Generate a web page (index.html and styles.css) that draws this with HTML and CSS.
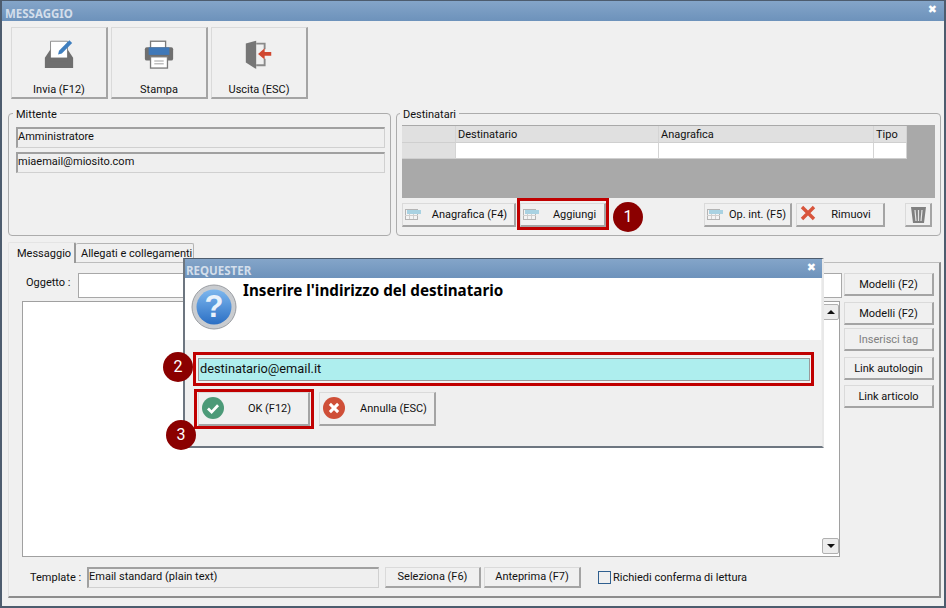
FILE: index.html
```html
<!DOCTYPE html>
<html lang="it">
<head>
<meta charset="utf-8">
<title>Messaggio</title>
<link rel="stylesheet" href="styles.css">
</head>
<body>
<div class="window">
  <div class="titlebar"><span class="title">MESSAGGIO</span><span class="close">✖</span></div>
  <div class="content">
    <div class="toolbar">
      <button class="btn tool">
        <svg width="34" height="34" viewBox="0 0 34 34"><path d="M8 4.500h18v18H8z" fill="#fff" stroke="#8a8a8a"/><path d="M2 22l6-9v9h18v-9l6 9v11H2z" fill="#6f6f6f"/><path d="M8 22q9 5 18 0v4H8z" fill="#6f6f6f"/><path d="M16 18.500l1-4L28 3.500l3 3-11 11z" fill="#3f7fbf"/></svg>
        <span>Invia (F12)</span>
      </button>
      <button class="btn tool">
        <svg width="34" height="34" viewBox="0 0 34 34"><rect x="8" y="4.500" width="16" height="8" fill="#fff" stroke="#7a7a7a" stroke-width="1.400"/><rect x="2" y="11" width="30" height="14" rx="2" fill="#6f6f6f"/><path d="M6 11h22v8H6z" fill="#3f78b8"/><rect x="8" y="21" width="18" height="12" fill="#fff" stroke="#7a7a7a" stroke-width="1.400"/><path d="M12 25.500h10M12 28.500h10" stroke="#999"/></svg>
        <span>Stampa</span>
      </button>
      <button class="btn tool">
        <svg width="34" height="34" viewBox="0 0 34 34"><path d="M3 7l11-3v30L3 27z" fill="#767676"/><path d="M14 6h10v7h-2V8h-8zM14 29h8v-6h2v8H14z" fill="#8a8a8a"/><path d="M16 18l7-6v4h7v4h-7v4z" fill="#d0472f"/></svg>
        <span>Uscita (ESC)</span>
      </button>
    </div>

    <div class="groups">
      <fieldset class="group sender">
        <legend>Mittente</legend>
        <div class="readonly">Amministratore</div>
        <div class="readonly">miaemail@miosito.com</div>
      </fieldset>
      <fieldset class="group recipients">
        <legend>Destinatari</legend>
        <div class="grid">
          <div class="grid-table">
            <div class="cell head"></div><div class="cell head">Destinatario</div><div class="cell head">Anagrafica</div><div class="cell head">Tipo</div>
            <div class="cell head"></div><div class="cell"></div><div class="cell"></div><div class="cell"></div>
          </div>
        </div>
        <div class="recipient-actions">
          <button class="btn act act-ana"><svg class="tbl" width="16" height="13" viewBox="0 0 16 13"><rect x="0.500" y="2.500" width="12" height="10" fill="#f4f4f4" stroke="#b4b4b4"/><path d="M0 8.500h13M4.500 3v9M8.500 3v9" stroke="#cfcfcf"/><rect x="2" y="3" width="14" height="4" fill="#a9d2e2"/></svg><span>Anagrafica (F4)</span></button>
          <button class="btn act act-add"><svg class="tbl" width="16" height="13" viewBox="0 0 16 13"><rect x="0.500" y="2.500" width="12" height="10" fill="#f4f4f4" stroke="#b4b4b4"/><path d="M0 8.500h13M4.500 3v9M8.500 3v9" stroke="#cfcfcf"/><rect x="2" y="3" width="14" height="4" fill="#a9d2e2"/></svg><span>Aggiungi</span></button>
          <button class="btn act act-op"><svg class="tbl" width="16" height="13" viewBox="0 0 16 13"><rect x="0.500" y="2.500" width="12" height="10" fill="#f4f4f4" stroke="#b4b4b4"/><path d="M0 8.500h13M4.500 3v9M8.500 3v9" stroke="#cfcfcf"/><rect x="2" y="3" width="14" height="4" fill="#a9d2e2"/></svg><span>Op. int. (F5)</span></button>
          <button class="btn act act-rem"><svg class="tbl x" width="16" height="16" viewBox="0 0 16 16"><path d="M2 2l12 12M14 2L2 14" stroke="#d8553c" stroke-width="3.400"/></svg><span>Rimuovi</span></button>
          <button class="btn act act-trash"><svg width="15" height="17" viewBox="0 0 15 17"><path d="M0 1h15l-2 16H2z" fill="#808080"/><path d="M4 4l1 11M7.500 4v11M11 4l-1 11" stroke="#e4e4e4" stroke-width="1.200"/></svg></button>
        </div>
      </fieldset>
    </div>

    <div class="tabs">
      <div class="tab active">Messaggio</div>
      <div class="tab">Allegati e collegamenti</div>
    </div>
    <div class="panel">
      <div class="subject-row">
        <label class="subject-label">Oggetto :</label>
        <div class="subject-input"></div>
        <button class="btn side">Modelli (F2)</button>
      </div>
      <div class="editor-row">
        <div class="editor">
          <div class="scrollbar">
            <span class="sb-btn"><i class="arrow up"></i></span>
            <span class="sb-btn"><i class="arrow down"></i></span>
          </div>
        </div>
        <div class="side-buttons">
          <button class="btn side">Modelli (F2)</button>
          <button class="btn side disabled">Inserisci tag</button>
          <button class="btn side login">Link autologin</button>
          <button class="btn side article">Link articolo</button>
        </div>
      </div>
      <div class="template-row">
        <label class="template-label">Template :</label>
        <div class="readonly template-field">Email standard (plain text)</div>
        <button class="btn tpl tpl-sel">Seleziona (F6)</button>
        <button class="btn tpl tpl-pre">Anteprima (F7)</button>
        <span class="check"></span>
        <span class="check-label">Richiedi conferma di lettura</span>
      </div>
    </div>
  </div>

  <div class="dialog">
    <div class="titlebar dlg-title"><span class="title">REQUESTER</span><span class="close">✖</span></div>
    <div class="dlg-top">
      <svg width="46" height="46" viewBox="0 0 46 46">
        <defs><linearGradient id="q" x1="0" y1="0" x2="0" y2="1"><stop offset="0" stop-color="#7db7ee"/><stop offset="1" stop-color="#2b6fc4"/></linearGradient></defs>
        <circle cx="23" cy="23" r="22" fill="#c9ccd0" stroke="#9a9da2"/>
        <circle cx="23" cy="23" r="17.500" fill="url(#q)"/>
        <text x="23" y="33" class="qmark" text-anchor="middle">?</text>
      </svg>
      <div class="dlg-heading">Inserire l'indirizzo del destinatario</div>
    </div>
    <div class="dlg-body">
      <div class="dlg-input">destinatario@email.it</div>
      <div class="dlg-actions">
        <button class="btn dlg-btn dlg-ok"><svg width="22" height="22" viewBox="0 0 24 24"><circle cx="12" cy="12" r="12" fill="#4c9a78"/><path d="M6.500 12.500l4 4 7-7.500" fill="none" stroke="#fff" stroke-width="3"/></svg><span>OK (F12)</span></button>
        <button class="btn dlg-btn dlg-no"><svg width="22" height="22" viewBox="0 0 24 24"><circle cx="12" cy="12" r="12" fill="#cf4f38"/><path d="M7.500 7.500l9 9M16.500 7.500l-9 9" stroke="#fff" stroke-width="3.200"/></svg><span>Annulla (ESC)</span></button>
      </div>
    </div>
  </div>

  <span class="mark box1"></span>
  <span class="mark box2"></span>
  <span class="mark box3"></span>
  <span class="badge b1">1</span>
  <span class="badge b2">2</span>
  <span class="badge b3">3</span>
</div>
</body>
</html>
```
FILE: styles.css
```css
* { box-sizing: border-box; }
html, body { margin: 0; padding: 0; }
body { width: 946px; height: 608px; overflow: hidden; background: #f0f0f0; font-family: Roboto, "Noto Sans", sans-serif; font-size: 11px; color: #111; }
.window { position: relative; width: 946px; height: 608px; display: flex; flex-direction: column; border: 2px solid #4d5c6e; border-top-width: 1px; background: #f0f0f0; }
.titlebar { flex: none; height: 20px; padding: 5px 3px 0 3px; display: flex; justify-content: space-between; background: linear-gradient(#84a5c9, #6d92bb); color: #d3deeb; }
.title { font-family: "Noto Sans", sans-serif; font-weight: bold; font-size: 11.5px; line-height: 15px; }
.close { color: #fff; font-size: 11px; line-height: 14px; margin-top: -3px; margin-right: 4px; font-family: "DejaVu Sans", sans-serif; }
.content { flex: 1; display: flex; flex-direction: column; padding: 6px 3px 8px 6px; min-height: 0; }
.btn { font: inherit; color: #111; background: #f0f0f0; border: 1px solid #dadada; border-right: 2px solid #a4a4a4; border-bottom: 2px solid #a4a4a4; padding: 0; margin: 0; display: flex; align-items: center; justify-content: center; }
.toolbar { display: flex; gap: 3px; padding-left: 3px; height: 72px; flex: none; }
.tool { width: 97px; height: 72px; flex-direction: column; padding-top: 9px; }
.tool span { margin-top: 13px; line-height: 15px; }
.groups { display: flex; gap: 5px; height: 131px; margin-top: 6px; flex: none; }
.group { margin: 0; padding: 0 5px; border: 1px solid #acacac; border-radius: 4px; min-width: 0; }
.group legend { padding: 3px 3px 0; margin-left: -2px; line-height: 14px; }
.sender { width: 383px; padding-top: 5px; padding-left: 7px; }
.sender legend { margin-left: -3px; }
.recipients { flex: 1; padding-top: 3px; }
.readonly { height: 21px; padding: 0; margin-top: 4px; line-height: 15px; border: 1px solid #d0d0d0; border-top: 2px solid #a0a0a0; border-left: 2px solid #a0a0a0; background: #efefef; white-space: nowrap; }
.sender .readonly:first-of-type { margin-top: 0; }
.grid { height: 73px; background: #a9a9a9; }
.grid-table { width: 505px; display: grid; grid-template-columns: 54px 203px 215px 33px; grid-template-rows: 17px 16px; padding-top: 1px; }
.cell { background: #fff; border-right: 1px solid #d4d4d4; border-bottom: 1px solid #cfcfcf; padding: 0 2px; line-height: 15px; }
.cell.head { background: #e0e0e0; padding-top: 1px; }
.recipient-actions { display: flex; margin-top: 5px; height: 24px; }
.act { position: relative; height: 24px; padding-left: 28px; }
.tbl { position: absolute; left: 2px; top: 3px; }
.tbl.x { left: 3px; top: 1px; }
.act-ana { width: 114px; padding-left: 22px; }
.act-add { width: 86px; margin-left: 4px; padding-left: 24px; }
.act-op { width: 88px; margin-left: 98px; padding-left: 20px; }
.act-rem { width: 89px; margin-left: 4px; padding-left: 22px; }
.act-trash { width: 27px; margin-left: 20px; padding: 0; }
.tabs { display: flex; height: 20px; margin-top: 6px; flex: none; align-items: flex-end; }
.tab { height: 19px; width: 118px; padding: 2px 0 0 5px; line-height: 15px; border: 1px solid #b4b4b4; border-bottom: none; border-left: none; border-radius: 2px 2px 0 0; white-space: nowrap; }
.tab.active { height: 21px; width: 68px; padding: 3px 0 0 8px; border-top: 1px solid #e4e4e4; border-right: 2px solid #999; border-left: 1px solid #e4e4e4; background: #f0f0f0; margin-bottom: -1px; position: relative; }
.panel { flex: 1; display: flex; flex-direction: column; padding: 10px 5px 0 13px; border-top: 1px solid #bdbdbd; border-left: 1px solid #e0e0e0; border-right: 2px solid #8d8d8d; border-bottom: 2px solid #8d8d8d; min-height: 0; width: 933px; }
.subject-row { display: flex; align-items: flex-start; height: 25px; flex: none; }
.subject-label { width: 56px; padding: 2px 0 0 4px; line-height: 15px; white-space: nowrap; }
.subject-input { width: 765px; height: 25px; background: #fff; border: 1px solid #a8a8a8; }
.subject-row .side { margin-left: 2px; }
.side { width: 90px; height: 23px; flex: none; }
.editor-row { display: flex; margin-top: 3px; height: 256px; flex: none; }
.editor { width: 819px; height: 256px; background: #fff; border: 1px solid #a0a0a0; display: flex; justify-content: flex-end; padding: 2px 0 2px; }
.scrollbar { width: 17px; display: flex; flex-direction: column; justify-content: space-between; }
.sb-btn { height: 16px; border: 1px solid #b0b0b0; border-radius: 2px; background: #ededed; display: flex; align-items: center; justify-content: center; }
.arrow { width: 0; height: 0; border-left: 4px solid transparent; border-right: 4px solid transparent; }
.arrow.up { border-bottom: 4px solid #111; }
.arrow.down { border-top: 4px solid #111; }
.side-buttons { display: flex; flex-direction: column; gap: 3px; margin-left: 4px; margin-top: 1px; }
.side.disabled { color: #808080; }
.side.login { margin-top: 3px; }
.side.article { margin-top: 2px; }
.template-row { display: flex; align-items: center; height: 22px; margin-top: 9px; flex: none; }
.template-label { width: 65px; padding-left: 8px; white-space: nowrap; }
.template-field { width: 292px; margin: 0; flex: none; }
.tpl { height: 21px; }
.tpl-sel { width: 96px; margin-left: 6px; }
.tpl-pre { width: 97px; margin-left: 3px; }
.check { width: 13px; height: 13px; margin-left: 17px; border: 1px solid #2f5f8f; background: #efefef; }
.check-label { margin-left: 2px; }
.dialog { position: absolute; left: 181px; top: 257px; width: 641px; height: 190px; display: flex; flex-direction: column; background: #efefef; border: 1px solid #50606e; border-width: 1px 2px 2px 2px; border-color: #4d5c6e #e8e8e8 #6d7680 #6d7680; }
.dlg-title { height: 19px; padding-left: 1px; padding-top: 4px; }
.dlg-title .close { margin-top: -2px; margin-right: 3px; }
.dlg-top { height: 62px; background: #fff; display: flex; padding: 6px 0 0 6px; flex: none; width: 636px; }
.qmark { font: bold 31px "Liberation Sans", sans-serif; fill: #e9f2fb; }
.dlg-heading { font: bold 15.2px "Noto Sans", sans-serif; margin: -4px 0 0 6px; line-height: 20px; color: #000; white-space: nowrap; }
.dlg-body { padding: 18px 0 0 13px; }
.dlg-input { width: 612px; height: 23px; background: #aeeeee; border: 1px solid #999; outline: 1px solid #f4f4f4; font-size: 12.8px; line-height: 20px; padding-left: 1px; }
.dlg-actions { display: flex; gap: 9px; margin-top: 11px; }
.dlg-btn { position: relative; height: 34px; padding-left: 32px; }
.dlg-btn svg { position: absolute; left: 3px; top: 4px; }
.dlg-ok { width: 112px; }
.dlg-no { width: 117px; padding-left: 33px; }
.mark { position: absolute; border: 3px solid #c00000; pointer-events: none; }
.box1 { left: 515px; top: 197px; width: 92px; height: 32px; }
.box2 { left: 191px; top: 351px; width: 621px; height: 34px; }
.box3 { left: 192px; top: 388px; width: 120px; height: 40px; }
.badge { position: absolute; width: 30px; height: 30px; border-radius: 50%; background: #8b0000; color: #fff; font-size: 16px; line-height: 30px; text-align: center; }
.b1 { left: 611px; top: 201px; }
.b2 { left: 161px; top: 351px; }
.b3 { left: 164px; top: 419px; }
```
